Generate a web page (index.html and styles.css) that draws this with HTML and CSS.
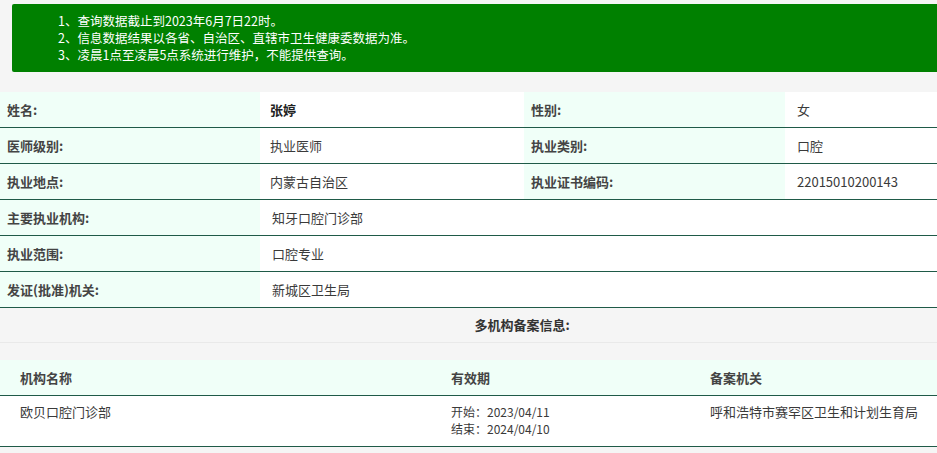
FILE: index.html
```html
<!DOCTYPE html>
<html lang="zh-CN">
<head>
<meta charset="utf-8">
<title>医师执业信息查询</title>
<link rel="stylesheet" href="styles.css">
</head>
<body>
<div class="page">
  <div class="notice">
    <p>1、查询数据截止到2023年6月7日22时。</p>
    <p>2、信息数据结果以各省、自治区、直辖市卫生健康委数据为准。</p>
    <p>3、凌晨1点至凌晨5点系统进行维护，不能提供查询。</p>
  </div>

  <table class="info">
    <colgroup>
      <col class="c1"><col class="c2"><col class="c3"><col class="c4">
    </colgroup>
    <tr>
      <th>姓名:</th><td class="strong">张婷</td>
      <th>性别:</th><td>女</td>
    </tr>
    <tr>
      <th>医师级别:</th><td>执业医师</td>
      <th>执业类别:</th><td>口腔</td>
    </tr>
    <tr>
      <th>执业地点:</th><td>内蒙古自治区</td>
      <th>执业证书编码:</th><td>22015010200143</td>
    </tr>
    <tr>
      <th>主要执业机构:</th><td colspan="3">知牙口腔门诊部</td>
    </tr>
    <tr>
      <th>执业范围:</th><td colspan="3">口腔专业</td>
    </tr>
    <tr>
      <th>发证(批准)机关:</th><td colspan="3">新城区卫生局</td>
    </tr>
  </table>

  <div class="multi-title">多机构备案信息:</div>

  <table class="multi">
    <colgroup>
      <col class="m1"><col class="m2"><col class="m3">
    </colgroup>
    <tr class="head">
      <th>机构名称</th><th>有效期</th><th>备案机关</th>
    </tr>
    <tr>
      <td>欧贝口腔门诊部</td>
      <td class="dates"><div>开始：2023/04/11</div><div>结束：2024/04/10</div></td>
      <td>呼和浩特市赛罕区卫生和计划生育局</td>
    </tr>
  </table>
</div>
</body>
</html>
```
FILE: styles.css
```css
html, body {
  margin: 0;
  padding: 0;
  background: #f5f5f5;
  overflow: hidden;
}

body {
  font-family: "Noto Sans CJK SC", "Noto Sans", sans-serif;
  font-size: 13px;
  color: #333;
}

.page {
  width: 1044px;
  padding-top: 4px;
}

.notice {
  margin-left: 12px;
  background: #008000;
  border-radius: 2px;
  color: #fff;
  padding: 8px 0 9px 46px;
  height: 51px;
}

.notice p {
  margin: 0;
  line-height: 17px;
  font-size: 12.5px;
}

.info {
  margin-top: 20px;
  width: 1044px;
  border-collapse: collapse;
  table-layout: fixed;
}

.info col.c1 { width: 260px; }
.info col.c2 { width: 264px; }
.info col.c3 { width: 261px; }
.info col.c4 { width: 259px; }

.info th,
.info td {
  height: 35px;
  padding: 0 0 0 7px;
  text-align: left;
  vertical-align: middle;
  border-bottom: 1px solid #1f5a48;
  line-height: 17px;
}

.info th {
  background: #f0fff8;
  font-weight: bold;
  color: #444;
}

.info td {
  background: #fff;
  padding-left: 10px;
  color: #3a3a3a;
}

.info td:last-child {
  padding-left: 12px;
}

.info .strong {
  font-weight: bold;
  color: #222;
}

.multi-title {
  height: 34px;
  line-height: 34px;
  text-align: center;
  font-weight: bold;
  color: #333;
  border-bottom: 1px solid #e9e9e9;
  margin-bottom: 17px;
}

.multi {
  width: 1044px;
  border-collapse: collapse;
  table-layout: fixed;
}

.multi col.m1 { width: 431px; }
.multi col.m2 { width: 259px; }
.multi col.m3 { width: 354px; }

.multi th,
.multi td {
  text-align: left;
  border-bottom: 1px solid #1f5a48;
  line-height: 17px;
}

.multi th {
  height: 35px;
  padding: 0 0 0 20px;
  background: #f0fff8;
  font-weight: bold;
  color: #444;
  vertical-align: middle;
}

.multi td {
  height: 51px;
  box-sizing: border-box;
  padding: 7px 0 0 20px;
  background: #fff;
  vertical-align: top;
  color: #3a3a3a;
}

.multi .dates {
  font-size: 12px;
  line-height: 17px;
}
```
